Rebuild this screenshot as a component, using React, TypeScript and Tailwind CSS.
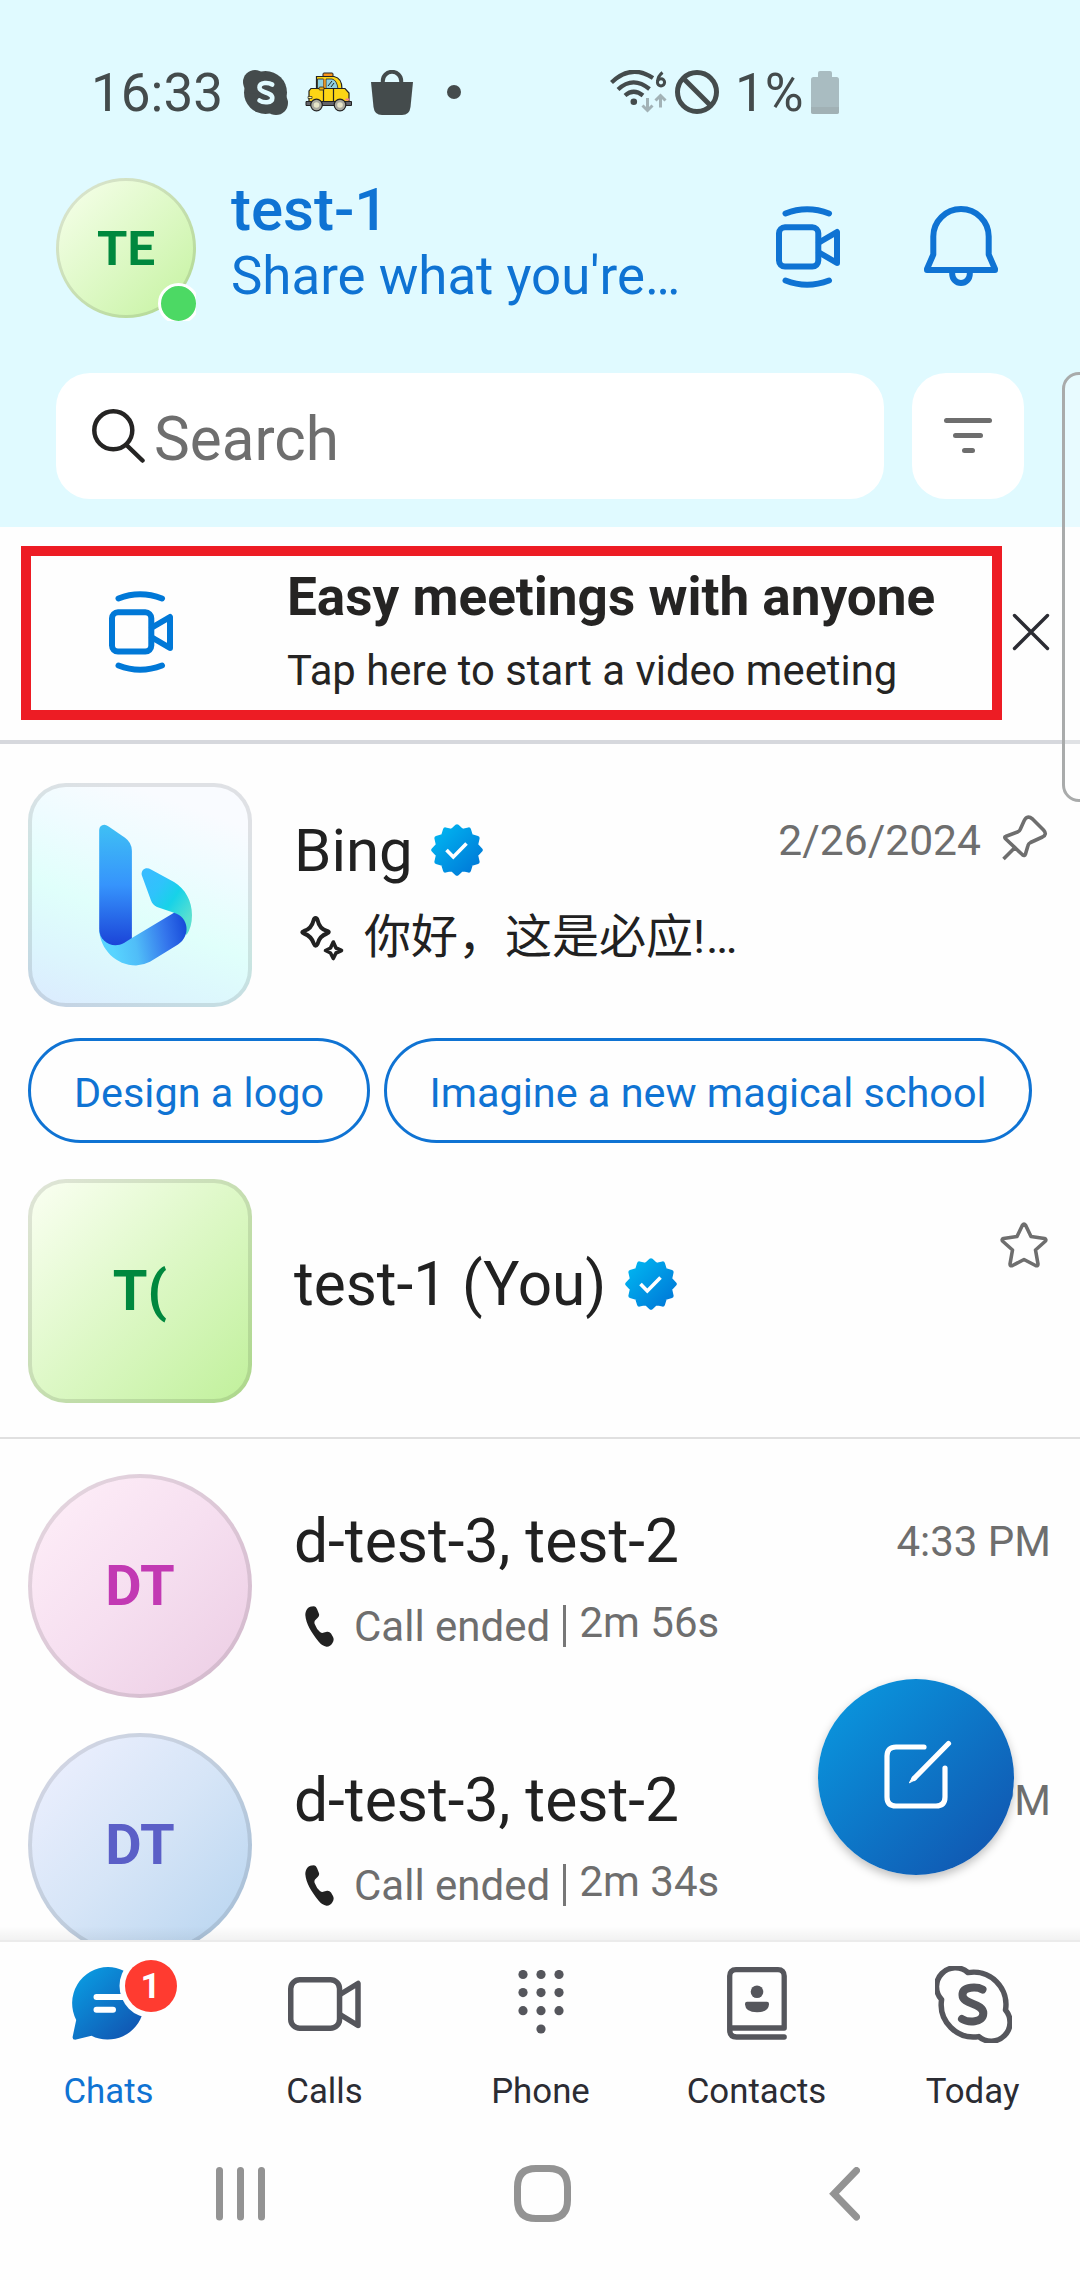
import React from "react";

function MeetIcon({ color }: { color: string }) {
  return (
    <svg width="64" height="82" viewBox="0 0 64 82" fill="none" stroke={color} strokeWidth="6" strokeLinecap="round" strokeLinejoin="round" className="shrink-0">
      <path d="M9.5 7.500Q31-1 53 7.500M9.500 74.500Q31 83 53 74.500" />
      <rect x="3" y="21.300" width="39.300" height="39.300" rx="6" />
      <path d="M43 36.500 61 26V57L43 46.500" />
    </svg>
  );
}

function BellIcon() {
  return (
    <svg width="74" height="80" viewBox="0 0 74 80" fill="none" stroke="#0f73d3" strokeWidth="6" strokeLinejoin="round" className="shrink-0">
      <path d="M9.300 30.500A27.700 27.500 0 0 1 64.700 30.500V48.500L71 63V64H3V63L9.300 48.500Z" />
      <path d="M28.200 65v3a8.800 9 0 0 0 17.600 0v-3" />
    </svg>
  );
}

function SkypeSolid() {
  return (
    <svg width="45" height="45" viewBox="0 0 45 45" className="shrink-0">
      <g fill="#444b4c">
        <circle cx="22.500" cy="22.500" r="21.500" />
        <circle cx="12" cy="12" r="12" />
        <circle cx="33" cy="33" r="12" />
      </g>
      <path d="M29.200 14.500C26 12.500 16.500 11.500 16.500 17.500C16.500 23.500 29.300 21.500 29.300 28C29.300 33.500 20 33 16.500 30.500" fill="none" stroke="#e0faff" strokeWidth="4.600" strokeLinecap="round" />
    </svg>
  );
}

function TaxiIcon() {
  return (
    <svg width="48" height="40" viewBox="0 0 48 40" className="shrink-0">
      <rect x="18" y="1" width="10" height="4" rx="1" fill="#f7941d" stroke="#222" strokeWidth="1" />
      <path d="M11.500 17V4.500H29Q37 6 37 17Z" fill="#fcd515" stroke="#222" strokeWidth="1.200" />
      <path d="M12.500 7h6v10h-6zM21 7h6q5 1 6 10H21z" fill="#8fd0e0" stroke="#222" strokeWidth=".8" />
      <path d="M18.500 7h2v9h-2z" fill="#e8902a" />
      <path d="m23 14 4-5m-1 6 3-4" stroke="#222" strokeWidth="1" />
      <path d="M4 30V19l2-2.500h34L44 21v9Z" fill="#fcd515" stroke="#222" strokeWidth="1.200" />
      <path d="M1 29.500h45.500v4H1z" fill="#62636a" stroke="#222" strokeWidth="1" />
      <path d="M18.500 17v12M28.500 17v12" stroke="#222" strokeWidth="1.200" />
      <rect x="14" y="15" width="5" height="3" rx="1" fill="#e8b018" stroke="#222" strokeWidth=".8" />
      <path d="M3 24.500h4v2H3z" fill="#fff3a0" stroke="#222" strokeWidth=".7" />
      <path d="M40.500 26.500h4v2h-4z" fill="#f08090" />
      <g fill="#a9a99f" stroke="#222" strokeWidth="1.200">
        <circle cx="11.500" cy="33" r="5.800" />
        <circle cx="35" cy="33" r="5.800" />
      </g>
      <g fill="#e6e4c8">
        <circle cx="11.500" cy="33" r="2.800" />
        <circle cx="35" cy="33" r="2.800" />
      </g>
    </svg>
  );
}

function WifiIcon() {
  return (
    <svg width="58" height="44" viewBox="0 0 58 44" fill="none" className="shrink-0">
      <g stroke="#444b4c" strokeWidth="4.200">
        <path d="M1.500 12.500Q21-6.500 43 8" />
        <path d="M8 19.500Q23 5.500 39.500 19" />
        <path d="M15 25.500Q23.500 18 33 25.500" />
      </g>
      <circle cx="23.800" cy="31.700" r="3.300" fill="#444b4c" />
      <circle cx="51" cy="12.300" r="3.600" stroke="#444b4c" strokeWidth="3" />
      <path d="M47.500 11.500Q48 6 52.500 2.500" stroke="#444b4c" strokeWidth="3" />
      <path d="M37.500 28V39M32.500 35.500 37.500 40.500 42.500 35.500M50.500 37.500V27M45.500 30.500 50.500 25.500 55.500 30.500" stroke="#a2b2b6" strokeWidth="3" />
    </svg>
  );
}

const scallop = Array.from({ length: 24 }, (_, i) => {
  const r = i % 2 === 0 ? 23.5 : 19.5;
  const a = (i * Math.PI) / 12 - Math.PI / 2;
  return `${(26 + r * Math.cos(a)).toFixed(2)},${(26 + r * Math.sin(a)).toFixed(2)}`;
}).join(" ");

function VerifiedBadge() {
  return (
    <svg width="52" height="52" viewBox="0 0 52 52" className="mb-[3px] shrink-0">
      <defs>
        <linearGradient id="verified" gradientUnits="userSpaceOnUse" x1="8" y1="8" x2="44" y2="44">
          <stop offset="0" stopColor="#00b1ef" />
          <stop offset="1" stopColor="#007cd9" />
        </linearGradient>
      </defs>
      <polygon points={scallop} fill="url(#verified)" stroke="url(#verified)" strokeWidth="4.500" strokeLinejoin="round" />
      <path d="M15.500 26 22.300 33 35.500 19.500" fill="none" stroke="#fff" strokeWidth="3.600" />
    </svg>
  );
}

function BingLogo() {
  return (
    <svg width="216" height="216" viewBox="4 4 216 216">
      <defs>
        <linearGradient id="bStem" x1="0" y1="0" x2="0" y2="1">
          <stop offset="0" stopColor="#3fc0f4" />
          <stop offset=".5" stopColor="#3694fc" />
          <stop offset="1" stopColor="#1b44d8" />
        </linearGradient>
        <linearGradient id="bBase" gradientUnits="userSpaceOnUse" x1="84" y1="160" x2="160" y2="146">
          <stop offset="0" stopColor="#58d4ff" />
          <stop offset=".3" stopColor="#50bdf8" />
          <stop offset=".7" stopColor="#3475ec" />
          <stop offset="1" stopColor="#1548d8" />
        </linearGradient>
        <linearGradient id="bArm" gradientUnits="userSpaceOnUse" x1="116" y1="96" x2="164" y2="130">
          <stop offset="0" stopColor="#38bdff" />
          <stop offset=".28" stopColor="#2fc3fb" />
          <stop offset=".6" stopColor="#17d2e8" />
          <stop offset="1" stopColor="#5ae0d0" />
        </linearGradient>
      </defs>
      <path d="M113.700 92C113 86 118.500 83.500 123 86.500L146 99C157 105.500 164 118 164 132Q164 144 158.600 152L146 129.700 129 124Q124.500 121.500 123 117.500Z" fill="url(#bArm)" />
      <path d="M71.200 147C72 166 88 182.500 108 182.500Q115.500 182 122 178.700L150 161.500C163 153 161 134 146 129.700L103.900 155Z" fill="url(#bBase)" />
      <path d="M71.200 47Q71.500 42 76.300 41.700Q78 41.700 81 43.700L97 54.700Q103.900 59.500 103.900 68V155L96 160C84 166.500 71.200 158 71.200 146Z" fill="url(#bStem)" />
    </svg>
  );
}

function PhoneGlyph() {
  return (
    <svg width="29" height="41" viewBox="0 0 29 41" className="shrink-0">
      <path d="M.3 9C.5 4 3 .6 6.500.400L9 .300Q11 .500 12 3L14 8Q14.500 10 13 11.500L10 14.500Q9 16 9.700 18Q11.500 23 15 26Q17 27.500 19 26.500L22 25.800Q24.500 25.500 26 27.500L28 31Q29.500 34 27.500 37Q25 41 21.500 40.700Q17 40 13.500 35.500C6 26 1 18 .3 9Z" fill="#212121" />
    </svg>
  );
}

function SkypeOutline() {
  return (
    <svg width="77" height="77" viewBox="0 0 77 77">
      <path d="M33 6.600A32.500 32.500 0 0 1 70.500 44A18.900 18.900 0 0 1 43.800 70.600A32.500 32.500 0 0 1 6.600 33.600A18.900 18.900 0 0 1 33 6.600Z" fill="none" stroke="#55565c" strokeWidth="5.500" strokeLinejoin="round" />
      <path d="M47.500 23.500C43 21 27.500 19.500 27.500 29C27.500 39 48.300 36.500 48.300 47.300C48.300 57.500 32.500 56.500 27 53" fill="none" stroke="#55565c" strokeWidth="8" strokeLinecap="round" />
    </svg>
  );
}

type ChatRow = { avatar: string; duration: string };

function CallRow({ avatar, duration }: ChatRow) {
  return (
    <div className="flex h-[259px] shrink-0 items-start pl-[28px] pr-[29px]">
      <div className={`flex h-[224px] w-[224px] shrink-0 items-center justify-center rounded-full border-[4px] text-[56px] font-bold leading-none ${avatar}`}>DT</div>
      <div className="ml-[42px] mt-[38px] flex flex-col">
        <span className="whitespace-nowrap text-[60.5px] leading-[60px] text-[#212121]">d-test-3, test-2</span>
        <div className="mt-[31px] flex h-[48px] items-start text-[42px] leading-none text-[#6e6e6e]">
          <div className="ml-[11px] mt-[3px] flex"><PhoneGlyph /></div>
          <span className="ml-[20px] mt-[3px] w-[196px] whitespace-nowrap">Call ended</span>
          <div className="ml-[12.5px] mt-[2px] h-[42px] w-[3px] bg-[#777]" />
          <span className="ml-[14px] mt-[-1px] whitespace-nowrap">{duration}</span>
        </div>
      </div>
      <span className="ml-auto mt-[47px] whitespace-nowrap text-[42px] leading-none text-[#6e6e6e]">4:33 PM</span>
    </div>
  );
}

function Tab({ label, active, children }: { label: string; active?: boolean; children: React.ReactNode }) {
  return (
    <div className="flex w-[216px] flex-col items-center">
      <div className="mt-[22px] flex h-[80px] items-center justify-center">{children}</div>
      <span className={`mt-[29px] whitespace-nowrap pl-[1px] text-[34.8px] leading-[36px] ${active ? "text-[#0f73d3]" : "text-[#2b2c33]"}`}>{label}</span>
    </div>
  );
}

export default function App() {
  return (
    <div className="relative flex h-[2280px] w-[1080px] flex-col overflow-hidden bg-[#fefefe] font-['Roboto','Noto_Sans_CJK_SC',sans-serif]">
      <header className="flex h-[527px] shrink-0 flex-col bg-[#e0faff]">
        <div className="flex h-[178px] items-start pl-[91px] pt-[62px]">
          <div className="flex h-[60px] items-center">
            <span className="w-[152px] whitespace-nowrap pt-[2px] text-[53px] leading-none text-[#444b4c]">16:33</span>
            <SkypeSolid />
            <div className="ml-[17px]"><TaxiIcon /></div>
            <svg width="42" height="45" viewBox="0 0 42 45" className="ml-[18px] shrink-0">
              <path d="M0 12H42L39.500 37Q38.500 45 31 45H11Q3.500 45 2.500 37Z" fill="#444b4c" />
              <path d="M11.800 14V11A9.200 9.200 0 0 1 30.200 11V14" fill="none" stroke="#444b4c" strokeWidth="4" />
            </svg>
            <div className="ml-[34px] h-[14px] w-[14px] rounded-full bg-[#444b4c]" />
            <div className="ml-[149px]"><WifiIcon /></div>
            <svg width="44" height="44" viewBox="0 0 44 44" fill="none" stroke="#444b4c" strokeWidth="5" className="ml-[7px] shrink-0">
              <circle cx="22" cy="22" r="19.500" />
              <path d="M8 8 36 36" />
            </svg>
            <span className="ml-[16px] w-[76px] whitespace-nowrap pt-[2px] text-[53px] leading-none text-[#444b4c]">1%</span>
            <svg width="28" height="43" viewBox="0 0 28 43" className="shrink-0">
              <rect x="7" y="0" width="14" height="10" rx="2" fill="#a9bcc1" />
              <rect x="0" y="6" width="28" height="37" rx="2.500" fill="#a9bcc1" />
              <path d="M0 36H28V40.500Q28 43 25.500 43H2.500Q0 43 0 40.500Z" fill="#a1b1b5" />
            </svg>
          </div>
        </div>
        <div className="flex h-[195px] items-start pl-[56px]">
          <div className="relative h-[143px] w-[140px] shrink-0 overflow-hidden">
            <div className="flex h-[140px] w-[140px] items-center justify-center rounded-full border-[3px] border-black/10 bg-linear-135 from-[#f8ffed] to-[#c4f29e] bg-origin-border text-[49px] font-bold leading-none text-[#00883e]">TE</div>
            <div className="absolute left-[102px] top-[105px] h-[41px] w-[41px] rounded-full border-[3px] border-white bg-[#4cd964]" />
          </div>
          <div className="ml-[35px] mt-[2px] flex w-[504px] flex-col text-[#0f73d3]">
            <span className="whitespace-nowrap text-[60px] font-medium leading-none">test-1</span>
            <span className="mt-[10px] whitespace-nowrap text-[52.8px] leading-[53px]">Share what you're…</span>
          </div>
          <div className="ml-[41px] mt-[28px]"><MeetIcon color="#0f73d3" /></div>
          <div className="ml-[84px] mt-[28px]"><BellIcon /></div>
        </div>
        <div className="flex h-[126px] gap-[28px] pl-[56px]">
          <div className="flex w-[828px] items-center rounded-[34px] bg-white pl-[36px]">
            <svg width="53" height="54" viewBox="0 0 53 54" fill="none" stroke="#252423" strokeWidth="4.500" strokeLinecap="round" className="mb-[1px] shrink-0">
              <circle cx="21.300" cy="21.300" r="19" />
              <path d="M35.500 37 50.500 51.500" />
            </svg>
            <span className="ml-[9px] mt-[8px] text-[60.2px] leading-[60px] text-[#6e6e6e]">Search</span>
          </div>
          <div className="flex w-[112px] flex-col items-center gap-[10px] rounded-[34px] bg-white pt-[45px]">
            <div className="h-[5px] w-[48px] rounded-full bg-[#6e6e6e]" />
            <div className="h-[5px] w-[30px] rounded-full bg-[#6e6e6e]" />
            <div className="h-[5px] w-[13px] rounded-full bg-[#6e6e6e]" />
          </div>
        </div>
      </header>

      <section className="flex h-[217px] shrink-0 items-start border-b-[4px] border-[#d6d8dd] pl-[21px] pt-[19px]">
        <div className="flex h-[174px] w-[981px] items-start border-[10px] border-[#ed1c24] pl-[78px] pt-[20px] text-[#252423]">
          <div className="mt-[15px]"><MeetIcon color="#0078d7" /></div>
          <div className="ml-[114px] mt-[-5px] flex flex-col">
            <span className="whitespace-nowrap text-[53.1px] font-bold leading-[53px]">Easy meetings with anyone</span>
            <span className="mt-[26px] whitespace-nowrap text-[41.8px] leading-[42px]">Tap here to start a video meeting</span>
          </div>
        </div>
        <svg width="38" height="38" viewBox="0 0 38 38" stroke="#2b2c33" strokeWidth="3.400" strokeLinecap="round" className="ml-[10px] mt-[67px] shrink-0">
          <path d="M2.500 2.500 35.500 35.500M35.500 2.500 2.500 35.500" />
        </svg>
      </section>

      <main className="relative flex h-[1196px] shrink-0 flex-col overflow-hidden">
        <div className="flex h-[294px] shrink-0 items-start pl-[28px] pr-[32px] pt-[39px]">
          <div className="h-[224px] w-[224px] shrink-0 overflow-hidden rounded-[38px] border-[4px] border-black/10 bg-[linear-gradient(20deg,#dbeafe_0%,#dcf6fd_22%,#e0fffb_42%,#eefcff_65%,#f9fbff_85%)] bg-origin-border">
            <BingLogo />
          </div>
          <div className="ml-[42px] mt-[38px] flex flex-col text-[#212121]">
            <div className="flex h-[60px] items-center">
              <span className="w-[137px] text-[60px] leading-none">Bing</span>
              <VerifiedBadge />
            </div>
            <div className="mt-[26px] flex h-[60px] items-center">
              <svg width="46" height="46" viewBox="0 0 46 46" fill="none" stroke="#212121" strokeWidth="4" strokeLinejoin="round" className="ml-[5px] mt-[2px] shrink-0">
                <path d="M16.500 3Q18 3 18.500 5Q20.500 14 28 16Q31.500 17 28 18.500Q20.500 21 18.500 29Q16.500 32.500 15 29Q12.500 21 5 18.500Q1.500 17.300 5 16Q12.500 14 14.700 5Q15.200 3 16.500 3Z" />
                <path d="M34.300 27 37 33 42.500 35.500 37 38 34.300 43.500 31.500 38 26.500 35.500 31.500 33Z" strokeWidth="3.600" />
              </svg>
              <span className="ml-[19px] whitespace-nowrap text-[47px] leading-[60px]">你好，这是必应<span className="tracking-[1px]">!…</span></span>
            </div>
          </div>
          <span className="ml-auto mt-[36px] text-[42.6px] leading-[42px] text-[#6e6e6e]">2/26/2024</span>
          <svg width="46" height="46" viewBox="0 0 46 46" fill="none" stroke="#6e6e6e" strokeWidth="3.600" strokeLinejoin="round" className="ml-[21px] mt-[32px] shrink-0">
            <path d="M1.500 44 14 31.500M3.500 21.500 15.500 17Q17.500 16.300 18.300 14.300L22 6Q25-.5 30.500 4L41.500 15Q45.500 19.500 40.500 22L28.500 27.500Q26.500 28.500 26 30.500L23.500 39Q22.500 41.500 20.500 39.800L3.500 23.800Q2 22 3.500 21.500Z" />
          </svg>
        </div>
        <div className="flex h-[105px] shrink-0 gap-[14px] pl-[28px] text-[41.4px] leading-[42px] text-[#0f73d3]">
          <div className="flex w-[342px] items-center justify-center whitespace-nowrap rounded-full border-[3px] border-[#0f73d3] pt-[5px]">Design a logo</div>
          <div className="flex w-[648px] items-center justify-center whitespace-nowrap rounded-full border-[3px] border-[#0f73d3] pt-[5px]">Imagine a new magical school</div>
        </div>
        <div className="flex h-[296px] shrink-0 items-start border-b-[2px] border-[#e0e0e0] pl-[28px] pr-[32px] pt-[36px]">
          <div className="flex h-[224px] w-[224px] shrink-0 items-center justify-center rounded-[38px] border-[4px] border-black/10 bg-linear-135 from-[#fbfff3] via-[#ddf8c6] to-[#c0f09a] bg-origin-border text-[56px] font-bold leading-none text-[#00883e]">T(</div>
          <div className="ml-[42px] mt-[76px] flex h-[60px] items-center">
            <span className="w-[331px] whitespace-nowrap text-[60.3px] leading-[60px] text-[#212121]">test-1 (You)</span>
            <VerifiedBadge />
          </div>
          <svg width="48" height="46" viewBox="0 0 48 46" fill="none" stroke="#6e6e6e" strokeWidth="3.600" strokeLinejoin="round" className="ml-auto mt-[43px] shrink-0">
            <path d="M22.500 3Q24 1 25.500 3L31 14.500 44.500 16.500Q47 17.500 45 19.500L35.500 28 38 42Q38 44.500 35.500 43.500L24 37.500 12.500 43.500Q10 44.500 10 42L12.500 28 3 19.500Q1 17.500 3.500 16.500L17 14.500Z" />
          </svg>
        </div>
        <div className="h-[35px] shrink-0" />
        <CallRow avatar="border-black/10 bg-linear-135 from-[#fff0f9] via-[#f6dff0] to-[#ebcce3] bg-origin-border text-[#c239b3]" duration="2m 56s" />
        <CallRow avatar="border-black/10 bg-linear-135 from-[#f0f1ff] via-[#d6e5f7] to-[#b5d3ef] bg-origin-border text-[#5b5fc7]" duration="2m 34s" />
        <div className="absolute bottom-0 left-0 h-[14px] w-full bg-linear-to-b from-transparent to-black/5" />
        <button className="absolute left-[818px] top-[935px] flex h-[196px] w-[196px] items-center justify-center rounded-full bg-linear-135 from-[#0a9ce2] to-[#1250ac] shadow-[0_4px_10px_rgba(0,0,0,0.25)]">
          <svg width="68" height="70" viewBox="0 0 68 70" fill="none" stroke="#fff" strokeWidth="5.200" strokeLinecap="round" className="mb-[4px] ml-[4px]">
            <path d="M40 7H12Q3 7 3 16V57Q3 66 12 66H52Q61 66 61 57V28" />
            <path d="M64.500 3.500 30 38.500" />
            <path d="M25.500 42.500 29 36.500 32 39Z" fill="#fff" strokeWidth="1" />
          </svg>
        </button>
      </main>

      <nav className="flex h-[190px] shrink-0 border-t-[2px] border-[#ebebeb]">
        <Tab label="Chats" active>
          <div className="relative mr-[1px] h-[74px] w-[72px]">
            <svg width="112" height="80" viewBox="0 0 112 80" className="absolute left-0 top-0">
              <defs>
                <linearGradient id="bubble" gradientUnits="userSpaceOnUse" x1="8" y1="8" x2="62" y2="66">
                  <stop offset="0" stopColor="#0a99e0" />
                  <stop offset="1" stopColor="#1156b2" />
                </linearGradient>
              </defs>
              <path d="M36 0A36.200 36.300 0 1 1 19.500 68.700L4 72.600Q0 73 .7 69.500L4.200 53A36.200 36.300 0 0 1 36 0Z" fill="url(#bubble)" />
              <path d="M24.500 30H52M24.500 42.700H41" stroke="#fff" strokeWidth="6" strokeLinecap="round" />
              <circle cx="79.500" cy="19" r="32" fill="#fefefe" />
            </svg>
            <div className="absolute left-[53px] top-[-7px] flex h-[52px] w-[52px] items-center justify-center rounded-full bg-[#ff3b30] text-[35px] font-bold leading-none text-white">1</div>
          </div>
        </Tab>
        <Tab label="Calls">
          <svg width="73" height="54" viewBox="0 0 73 54" fill="none" stroke="#55565c" strokeWidth="5.500" strokeLinejoin="round">
            <rect x="2.750" y="2.750" width="48.800" height="48.500" rx="9" />
            <path d="M52 17.500 70 6.500V48.500L52 37.500" />
          </svg>
        </Tab>
        <Tab label="Phone">
          <svg width="46" height="64" viewBox="0 0 46 64" fill="#55565c" className="mb-[4px] ml-[2px]">
            {[5, 23, 41].map((x) => [4.5, 22.6, 40.7].map((y) => <circle key={`${x}-${y}`} cx={x} cy={y} r="4.600" />))}
            <circle cx="23" cy="59" r="4.600" />
          </svg>
        </Tab>
        <Tab label="Contacts">
          <svg width="60" height="73" viewBox="0 0 60 73" fill="none" stroke="#55565c" strokeWidth="5.300" strokeLinecap="round" className="mb-[1px] ml-[2px]">
            <path d="M57.200 61V9Q57.200 2.700 51 2.700H9Q2.700 2.700 2.700 9V63Q2.700 70 9.500 70H57.200M3 61H57" />
            <circle cx="30" cy="24.700" r="6.300" fill="#55565c" stroke="none" />
            <path d="M20 34.700H40Q42.200 34.700 42 37.500Q41.500 45.300 30 45.300T18 37.500Q17.800 34.700 20 34.700Z" fill="#55565c" stroke="none" />
          </svg>
        </Tab>
        <Tab label="Today"><div className="ml-[2px]"><SkypeOutline /></div></Tab>
      </nav>

      <footer className="flex h-[126px] items-start pt-[13px]">
        <svg width="50" height="54" viewBox="0 0 50 54" stroke="#939393" strokeWidth="7" strokeLinecap="round" className="ml-[216px] mt-[24px] shrink-0">
          <path d="M3.500 3.500V50M24.500 3.500V50M45.500 3.500V50" />
        </svg>
        <svg width="57" height="57" viewBox="0 0 57 57" fill="none" stroke="#939393" strokeWidth="7" className="ml-[248px] mt-[22px] shrink-0">
          <path d="M22 3.500H35Q53.500 3.500 53.500 22V35Q53.500 53.500 35 53.500H22Q3.500 53.500 3.500 35V22Q3.500 3.500 22 3.500Z" />
        </svg>
        <svg width="31" height="54" viewBox="0 0 31 54" fill="none" stroke="#939393" strokeWidth="7" strokeLinecap="round" className="ml-[258px] mt-[24px] shrink-0">
          <path d="M27.500 3.500 5 26.700 27.500 50" />
        </svg>
      </footer>

      <div className="absolute right-[-16px] top-[372px] h-[430px] w-[34px] rounded-[18px] border-[3px] border-[#a9abab] bg-white/25" />
    </div>
  );
}
